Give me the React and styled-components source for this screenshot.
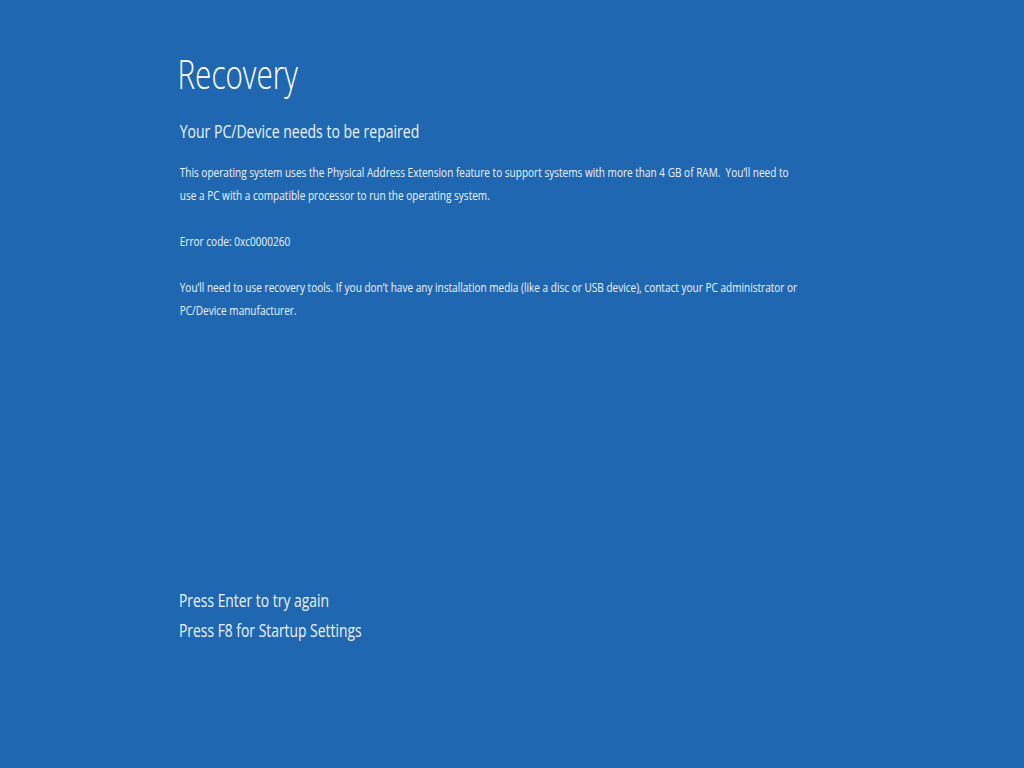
import React from 'react';
import styled, { createGlobalStyle } from 'styled-components';

const SQUEEZE = 0.75;

const GlobalStyle = createGlobalStyle`
	html, body {
		margin: 0;
		padding: 0;
		background: #2067b2;
	}
	body {
		font-family: 'Open Sans', 'Noto Sans', sans-serif;
		color: #ffffff;
	}
`;

const Screen = styled.div`
	width: 1024px;
	height: 768px;
	background: #2067b2;
	display: flex;
	flex-direction: column;
	justify-content: space-between;
	padding: 50px 0 123px 179px;
	box-sizing: border-box;
	overflow: hidden;
`;

const Column = styled.div`
	display: flex;
	flex-direction: column;
	transform: scaleX(${SQUEEZE});
	transform-origin: left top;
	white-space: pre;
`;

const Title = styled.h1`
	margin: 0 0 0 -2px;
	font-size: 39.5px;
	font-weight: 300;
	line-height: 48px;
`;

const Subtitle = styled.h2`
	margin: 20px 0 17px 1px;
	font-size: 18.7px;
	font-weight: 400;
	line-height: 26px;
	color: #eef4ff;
`;

const Paragraph = styled.p`
	margin: 0 0 23px 1px;
	font-size: 13.4px;
	line-height: 23px;
	color: #eef4ff;
`;

const Prompt = styled.div`
	font-size: 18.5px;
	line-height: 30px;
	color: #eef4ff;
`;

export default function App() {
	return (
		<>
			<GlobalStyle />
			<Screen>
				<Column>
					<Title>Recovery</Title>
					<Subtitle>Your PC/Device needs to be repaired</Subtitle>
					<Paragraph>
						{'This operating system uses the Physical Address Extension feature to support systems with more than 4 GB of RAM.  You\u2019ll need to\nuse a PC with a compatible processor to run the operating system.'}
					</Paragraph>
					<Paragraph>Error code: 0xc0000260</Paragraph>
					<Paragraph>
						{'You\u2019ll need to use recovery tools. If you don\u2019t have any installation media (like a disc or USB device), contact your PC administrator or\nPC/Device manufacturer.'}
					</Paragraph>
				</Column>
				<Column>
					<Prompt>Press Enter to try again</Prompt>
					<Prompt>Press F8 for Startup Settings</Prompt>
				</Column>
			</Screen>
		</>
	);
}
